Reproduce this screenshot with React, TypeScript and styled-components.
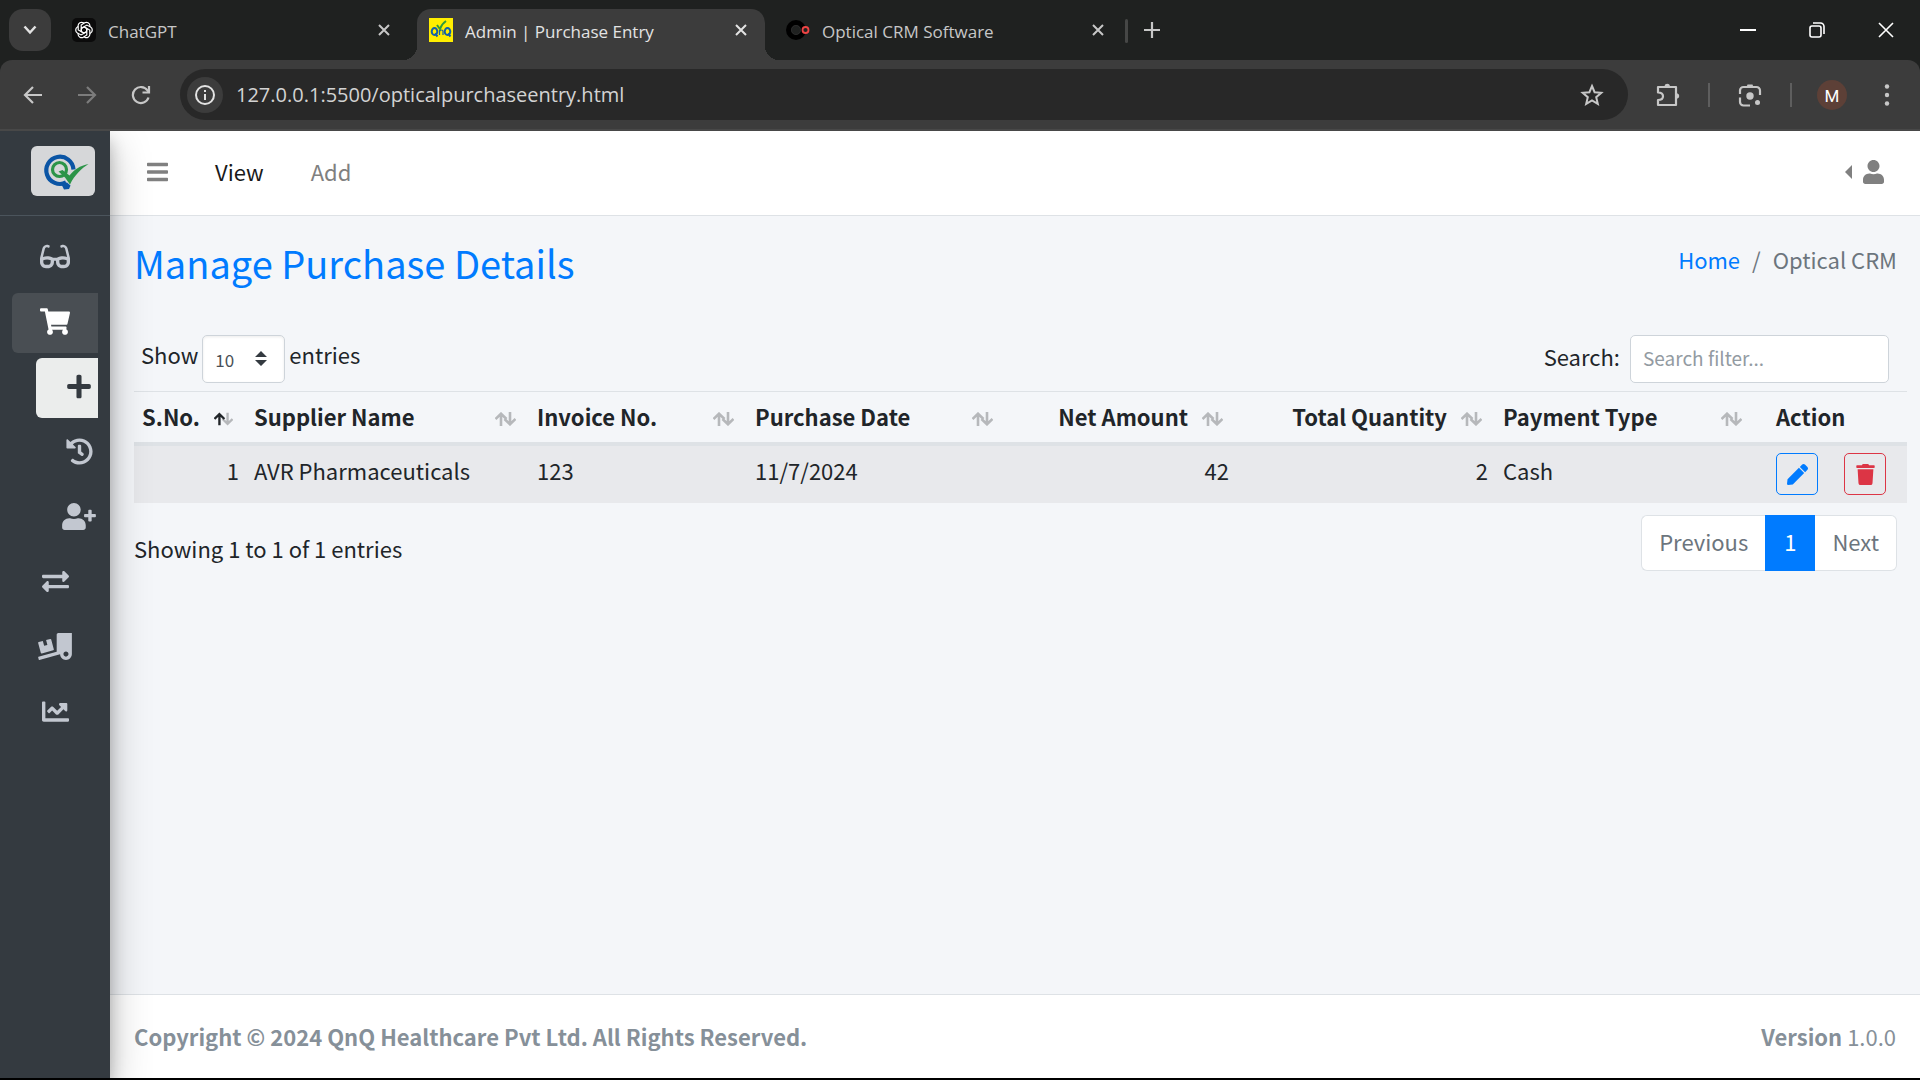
import React from 'react';
import styled, { createGlobalStyle, css } from 'styled-components';
import {
  FaBars,
  FaChartLine,
  FaExchangeAlt,
  FaGlasses,
  FaHistory,
  FaPen,
  FaPlus,
  FaShoppingCart,
  FaTrash,
  FaTruckLoading,
  FaUser,
  FaUserPlus,
} from 'react-icons/fa';

const GlobalStyle = createGlobalStyle`
  *, *::before, *::after { box-sizing: border-box; }
  body {
    margin: 0;
    background: #000;
    color: #212529;
    font-family: "Noto Sans CJK SC", "Noto Sans", sans-serif;
    font-size: 22px;
    line-height: 36px;
  }
  button, input, select { font: inherit; margin: 0; }
  a { text-decoration: none; }
`;

const Window = styled.div`
  display: flex;
  flex-direction: column;
  min-height: 100vh;
  padding-bottom: 2px;
`;

/* ---------- browser frame ---------- */

const chromeFont = css`
  font-family: "Open Sans", "Noto Sans", sans-serif;
`;

const TabStrip = styled.div`
  ${chromeFont}
  display: flex;
  height: 60px;
  padding-left: 9px;
  background: #1f2120;
  color: #c7c7c7;
  font-size: 17px;
  line-height: 24px;
`;

const IconButton = styled.button`
  display: flex;
  align-items: center;
  justify-content: center;
  flex: none;
  padding: 0;
  border: 0;
  background: none;
  color: inherit;
  svg { display: block; }
`;

const TabSearch = styled(IconButton)`
  width: 42px;
  height: 42px;
  margin: 9px 9px 0 0;
  border-radius: 14px;
  background: #3c3c3c;
  color: #e3e3e3;
`;

const Tab = styled.div<{ $active?: boolean }>`
  position: relative;
  display: flex;
  align-items: center;
  flex: 0 1 auto;
  width: ${(p) => (p.$active ? 348 : 357)}px;
  height: 51px;
  margin-top: 9px;
  padding: 0 18px 9px 12px;
  border-radius: 14px 14px 0 0;
  ${(p) =>
    p.$active &&
    css`
      background: #3c3c3c;
      color: #e3e3e3;
      &::before, &::after {
        content: "";
        position: absolute;
        bottom: 0;
        width: 14px;
        height: 14px;
      }
      &::before { left: -14px; background: radial-gradient(circle at 0 0, transparent 14px, #3c3c3c 14px); }
      &::after { right: -14px; background: radial-gradient(circle at 100% 0, transparent 14px, #3c3c3c 14px); }
    `}
  &:first-of-type { padding-right: 27px; }
  &:last-of-type { padding-left: 21px; }
`;

const Tabs = styled.div`
  display: flex;
  min-width: 0;
`;

const TabTitle = styled.span`
  flex: 1;
  margin-left: 12px;
  padding-top: 4px;
  white-space: nowrap;
`;

const TabDivider = styled.span`
  width: 3px;
  height: 24px;
  margin: 19px 14px 0 3px;
  border-radius: 2px;
  background: #464746;
`;

const NewTab = styled(IconButton)`
  width: 20px;
  height: 60px;
`;

const WindowButtons = styled.div`
  display: flex;
  margin-left: auto;
  color: #fff;
`;

const WindowButton = styled(IconButton)`
  width: 69px;
  height: 59px;
`;

const ToolbarWrap = styled.div`
  background: #1f2120;
`;

const Toolbar = styled.div`
  ${chromeFont}
  display: flex;
  align-items: center;
  height: 71px;
  padding: 0 19px 0 6px;
  background: #3c3c3c;
  border-bottom: 2px solid #484848;
  border-radius: 12px 12px 0 0;
  color: #c7c7c7;
`;

const NavButton = styled(IconButton)<{ $dim?: boolean }>`
  width: 54px;
  height: 51px;
  color: ${(p) => (p.$dim ? '#7c7c7c' : '#c7c7c7')};
`;

const AddressBar = styled.div`
  display: flex;
  align-items: center;
  flex: 1;
  height: 51px;
  margin-left: 12px;
  padding: 0 24px 0 7px;
  border-radius: 26px;
  background: #282828;
`;

const SiteInfo = styled(IconButton)`
  width: 36px;
  height: 36px;
  margin-right: 13px;
  border-radius: 50%;
  background: #3c3c3c;
  color: #e3e3e3;
`;

const Address = styled.input`
  flex: 1;
  min-width: 0;
  padding: 0;
  border: 0;
  outline: 0;
  background: none;
  color: #d3d3d3;
  font-size: 20px;
  line-height: 28px;
`;

const ToolbarDivider = styled.span`
  width: 2px;
  height: 24px;
  margin: 0 12px;
  background: #5e5e5e;
`;

const ToolButton = styled(IconButton)`
  width: 56px;
  height: 51px;
`;

const Extensions = styled(ToolButton)`
  margin-left: 12px;
`;

const Avatar = styled.button`
  width: 30px;
  height: 30px;
  margin: 0 26px 0 13px;
  padding: 0;
  border: 0;
  border-radius: 50%;
  background: #5d4037;
  color: #fff;
  font-family: Roboto, sans-serif;
  font-size: 17px;
  line-height: 32px;
`;

/* ---------- application ---------- */

const Page = styled.div`
  display: flex;
  flex: 1;
  background: #f4f6f9;
`;

const Sidebar = styled.aside`
  position: relative;
  z-index: 1;
  flex: none;
  width: 110px;
  background: #343a40;
  box-shadow: 0 14px 42px rgba(0, 0, 0, 0.25), 0 10px 15px rgba(0, 0, 0, 0.22);
  clip-path: inset(0 -60px 0 0);
`;

const Brand = styled.a`
  display: flex;
  height: 85px;
  padding: 15px 0 0 31px;
  border-bottom: 1px solid #4b545c;
`;

const BrandMark = styled.span`
  width: 64px;
  height: 50px;
  border-radius: 6px;
  background: #d6d7d9;
`;

const Menu = styled.nav`
  display: flex;
  flex-direction: column;
  gap: 5px;
  padding: 12px 12px 0;
`;

const MenuItem = styled.a<{ $tone?: 'active' | 'current'; $nested?: boolean; $iconWidth: number }>`
  display: flex;
  align-items: center;
  justify-content: center;
  height: 60px;
  padding-bottom: 4px;
  margin-left: ${(p) => (p.$nested ? 24 : 0)}px;
  padding-left: ${(p) => (p.$nested ? 24 : 0)}px;
  border-radius: 6px 0 0 6px;
  color: ${(p) => (p.$tone === 'active' ? '#fff' : p.$tone === 'current' ? '#343a40' : '#c2c7d0')};
  background: ${(p) => (p.$tone === 'active' ? '#494e53' : p.$tone === 'current' ? '#ebedec' : 'none')};
  svg {
    flex: none;
    width: ${(p) => p.$iconWidth}px;
    height: 27px;
  }
`;

const Main = styled.div`
  display: flex;
  flex: 1;
  flex-direction: column;
  min-width: 0;
`;

const Navbar = styled.header`
  display: flex;
  align-items: center;
  height: 85px;
  padding: 0 36px 3px 37px;
  border-bottom: 1px solid #dee2e6;
  background: #fff;
  color: #808080;
  svg { width: 21px; height: 24px; }
`;

const NavLink = styled.a<{ $active?: boolean }>`
  margin-left: 47px;
  padding-bottom: 2px;
  color: ${(p) => (p.$active ? '#191919' : '#808080')};
`;

const UserMenu = styled(IconButton)`
  gap: 11px;
  margin-left: auto;
`;

const Caret = styled.span`
  border: 7px solid transparent;
  border-right-color: currentColor;
  border-left: 0;
`;

const Content = styled.main`
  flex: 1;
  padding: 21px 13px 0 24px;
`;

const PageHead = styled.div`
  display: flex;
  justify-content: space-between;
  padding-right: 10px;
`;

const Title = styled.h1`
  margin: 0;
  color: #007bff;
  font-size: 38px;
  font-weight: 400;
  line-height: 51px;
`;

const Crumbs = styled.nav`
  display: flex;
  gap: 12px;
  padding-top: 4px;
  color: #6c757d;
  a { color: #007bff; }
`;

const TableTools = styled.div`
  display: flex;
  justify-content: space-between;
  padding: 47px 18px 8px 7px;
`;

const LengthLabel = styled.label`
  display: flex;
  gap: 4px;
  line-height: 39px;
`;

const controlBox = css`
  height: 48px;
  border: 1px solid #ced4da;
  border-radius: 5px;
  background: #fff;
  color: #495057;
`;

const SelectBox = styled.span`
  position: relative;
  display: flex;
  svg { position: absolute; right: 18px; top: 16px; pointer-events: none; }
`;

const LengthSelect = styled.select`
  ${controlBox}
  width: 83px;
  padding: 0 12px;
  appearance: none;
  box-shadow: inset 0 1px 3px rgba(0, 0, 0, 0.08);
  font-size: 17px;
`;

const SearchLabel = styled.label`
  display: flex;
  gap: 10px;
  line-height: 43px;
`;

const SearchInput = styled.input`
  ${controlBox}
  width: 259px;
  padding: 0 12px 3px;
  font-size: 19px;
  &::placeholder { color: #939ba2; opacity: 1; }
`;

const Table = styled.table`
  width: 100%;
  table-layout: fixed;
  border-collapse: separate;
  border-spacing: 0;
`;

const HeadCell = styled.th<{ $end?: boolean }>`
  height: 55px;
  padding: 0 13px 0 8px;
  border-top: 1px solid #dee2e6;
  border-bottom: 4px solid #dee2e6;
  font-weight: 700;
  line-height: 36px;
  text-align: left;
  white-space: nowrap;
  &:last-child { padding-left: 21px; }
  > span {
    display: flex;
    align-items: center;
    justify-content: ${(p) => (p.$end ? 'flex-end' : 'space-between')};
    gap: 14px;
    padding-bottom: 3px;
  }
  svg { margin-top: 6px; }
`;

const Cell = styled.td<{ $end?: boolean }>`
  height: 57px;
  padding: 6px 7px 12px 8px;
  background: #e8e9ec;
  text-align: ${(p) => (p.$end ? 'right' : 'left')};
  vertical-align: top;
  &:last-child { padding: 7px 21px 8px; }
`;

const Actions = styled.div`
  display: flex;
  gap: 26px;
`;

const ActionButton = styled(IconButton)<{ $color: string }>`
  width: 42px;
  height: 42px;
  border: 1px solid ${(p) => p.$color};
  border-radius: 5px;
  color: ${(p) => p.$color};
`;

const TableFoot = styled.div`
  display: flex;
  justify-content: space-between;
  padding: 12px 10px 0 0;
`;

const Info = styled.div`
  padding-top: 15px;
`;

const Pager = styled.div`
  display: flex;
  height: 56px;
`;

const PageButton = styled.button<{ $active?: boolean }>`
  padding: 0 ${(p) => (p.$active ? 18 : 17)}px 4px;
  border: 1px solid ${(p) => (p.$active ? '#007bff' : '#dee2e6')};
  background: ${(p) => (p.$active ? '#007bff' : '#fff')};
  color: ${(p) => (p.$active ? '#fff' : '#6c757d')};
  &:first-child { border-right: 0; border-radius: 6px 0 0 6px; }
  &:last-child { border-left: 0; border-radius: 0 6px 6px 0; }
`;

const Footer = styled.footer`
  display: flex;
  justify-content: space-between;
  padding: 24px;
  border-top: 1px solid #dee2e6;
  background: #fff;
  color: #869099;
  line-height: 35px;
`;

/* ---------- drawings ---------- */

const CloseIcon = () => (
  <svg width="12" height="12" viewBox="0 0 12 12" stroke="currentColor" strokeWidth="2">
    <path d="M1 1l10 10M11 1L1 11" />
  </svg>
);

const ChatIcon = () => (
  <svg width="24" height="24" viewBox="0 0 24 24" fill="none" stroke="#fff" strokeWidth="1.2">
    <rect width="24" height="24" rx="5" fill="#0b0b0b" stroke="none" />
    {[0, 60, 120, 180, 240, 300].map((a) => (
      <path key={a} transform={`rotate(${a} 12 12)`} d="M9.2 13.6V7l3.5-2.2a3.5 3.5 0 0 1 5.2 3v1M9.2 10.5L12 9" />
    ))}
  </svg>
);

const QnqIcon = () => (
  <svg width="24" height="24" viewBox="0 0 24 24" fill="none">
    <rect width="24" height="24" fill="#ffee00" />
    <ellipse cx="5.5" cy="13.5" rx="2.8" ry="3.5" stroke="#1560a8" strokeWidth="2" />
    <ellipse cx="18.5" cy="13.5" rx="2.8" ry="3.5" stroke="#1560a8" strokeWidth="2" />
    <path d="M6 15.5l2.500 3M19 15.5l2.500 3" stroke="#1560a8" strokeWidth="2" />
    <path d="M10.5 17v-5M10.5 13.5c1-2 3.5-2 3.5 0V17" stroke="#1560a8" strokeWidth="1.2" />
    <path d="M8 7l3 4c1-3 3-6 6-8" stroke="#2f9a3c" strokeWidth="2" />
  </svg>
);

const OpticalIcon = () => (
  <svg width="24" height="24" viewBox="0 0 24 24" fill="none">
    <circle cx="10" cy="12" r="7.5" stroke="#000" strokeWidth="5" />
    <circle cx="10" cy="12" r="4.5" stroke="#2b2b2b" />
    <circle cx="19.5" cy="12" r="3" fill="#1f2120" stroke="#ef4444" strokeWidth="1.8" />
  </svg>
);

const ArrowIcon = ({ flip }: { flip?: boolean }) => (
  <svg width="20" height="20" viewBox="0 0 20 20" fill="none" stroke="currentColor" strokeWidth="2.2">
    <path d={flip ? 'M1 10h17M10 2l8 8-8 8' : 'M19 10H2M10 2l-8 8 8 8'} />
  </svg>
);

const ReloadIcon = () => (
  <svg width="20" height="20" viewBox="0 0 20 20" fill="none" stroke="currentColor" strokeWidth="2.2">
    <path d="M17.5 12.5A8 8 0 1 1 16.5 5.5L18 7" />
    <path d="M18 1v6.5h-6.5" />
  </svg>
);

const LogoDrawing = () => (
  <svg width="64" height="50" viewBox="0 0 64 50" fill="none">
    <path d="M35 36.5A13.6 13.6 0 1 1 42.5 23.5" stroke="#0b55a5" strokeWidth="4.2" />
    <path d="M30 37.5l6-1 3.5 3-1.5 3.5-5 .5z" fill="#0b55a5" />
    <circle cx="28.5" cy="23.5" r="7" stroke="#2c9448" strokeWidth="3.2" />
    <path d="M27.5 25.5l4-1.5 7 5.5C43 24 49 19.5 57.5 18 51 22 43.5 29 39 38.5l-5-7z" fill="#2c9448" />
  </svg>
);

const SortIcon = ({ sorted }: { sorted?: boolean }) => (
  <svg width="21" height="14" viewBox="0 0 21 14" fill="none" strokeWidth="2.6">
    <path d="M15 0v12M9.5 7l5.5 5.300 5.500-5.300" stroke="#b6b8bb" />
    <path d="M6 14V2M.5 7L6 1.700 11.500 7" stroke={sorted ? '#212529' : '#b6b8bb'} />
  </svg>
);

const menu: {
  label: string;
  icon: React.ReactNode;
  iconWidth: number;
  tone?: 'active' | 'current';
  nested?: boolean;
}[] = [
  { label: 'Optical', icon: <FaGlasses />, iconWidth: 30 },
  { label: 'Purchase', icon: <FaShoppingCart />, iconWidth: 30, tone: 'active' },
  { label: 'New purchase', icon: <FaPlus />, iconWidth: 24, tone: 'current', nested: true },
  { label: 'Purchase history', icon: <FaHistory />, iconWidth: 27, nested: true },
  { label: 'Add supplier', icon: <FaUserPlus />, iconWidth: 34, nested: true },
  { label: 'Exchange', icon: <FaExchangeAlt />, iconWidth: 27 },
  { label: 'Delivery', icon: <FaTruckLoading />, iconWidth: 34 },
  { label: 'Reports', icon: <FaChartLine />, iconWidth: 27 },
];

const columns: { title: string; width: number; end?: boolean; sorted?: boolean; plain?: boolean }[] = [
  { title: 'S.No.', width: 112, sorted: true },
  { title: 'Supplier Name', width: 283 },
  { title: 'Invoice No.', width: 218 },
  { title: 'Purchase Date', width: 259 },
  { title: 'Net Amount', width: 230, end: true },
  { title: 'Total Quantity', width: 259, end: true },
  { title: 'Payment Type', width: 260 },
  { title: 'Action', width: 152, plain: true },
];

export default function App() {
  return (
    <Window>
      <GlobalStyle />
      <TabStrip>
        <TabSearch aria-label="Search tabs">
          <svg width="14" height="10" viewBox="0 0 14 10" fill="none" stroke="currentColor" strokeWidth="2.5">
            <path d="M1.5 1.5L7 7.5l5.5-6" />
          </svg>
        </TabSearch>
        <Tabs>
          <Tab>
            <ChatIcon />
            <TabTitle>ChatGPT</TabTitle>
            <IconButton aria-label="Close ChatGPT"><CloseIcon /></IconButton>
          </Tab>
          <Tab $active>
            <QnqIcon />
            <TabTitle>Admin | Purchase Entry</TabTitle>
            <IconButton aria-label="Close Admin"><CloseIcon /></IconButton>
          </Tab>
          <Tab>
            <OpticalIcon />
            <TabTitle>Optical CRM Software</TabTitle>
            <IconButton aria-label="Close Optical CRM Software"><CloseIcon /></IconButton>
          </Tab>
        </Tabs>
        <TabDivider />
        <NewTab aria-label="New tab">
          <svg width="16" height="16" viewBox="0 0 16 16" stroke="currentColor" strokeWidth="2.2">
            <path d="M8 0v16M0 8h16" />
          </svg>
        </NewTab>
        <WindowButtons>
          <WindowButton aria-label="Minimize">
            <svg width="16" height="2" viewBox="0 0 16 2" fill="currentColor">
              <path d="M0 0h16v2H0z" />
            </svg>
          </WindowButton>
          <WindowButton aria-label="Restore">
            <svg width="16" height="16" viewBox="0 0 16 16" fill="none" stroke="currentColor" strokeWidth="1.6">
              <rect x="1" y="4" width="11" height="11" rx="2" />
              <path d="M4 1h7.5A3.5 3.5 0 0 1 15 4.5V12" />
            </svg>
          </WindowButton>
          <WindowButton aria-label="Close window">
            <svg width="16" height="16" viewBox="0 0 16 16" stroke="currentColor" strokeWidth="1.6">
              <path d="M1 1l14 14M15 1L1 15" />
            </svg>
          </WindowButton>
        </WindowButtons>
      </TabStrip>

      <ToolbarWrap>
        <Toolbar>
          <NavButton aria-label="Back"><ArrowIcon /></NavButton>
          <NavButton aria-label="Forward" $dim><ArrowIcon flip /></NavButton>
          <NavButton aria-label="Reload"><ReloadIcon /></NavButton>
          <AddressBar>
            <SiteInfo aria-label="Site information">
              <svg width="20" height="20" viewBox="0 0 20 20" fill="none" stroke="currentColor" strokeWidth="2">
                <circle cx="10" cy="10" r="9" />
                <path d="M10 9v6M10 5v2" />
              </svg>
            </SiteInfo>
            <Address aria-label="Address" defaultValue="127.0.0.1:5500/opticalpurchaseentry.html" />
            <IconButton aria-label="Bookmark">
              <svg width="24" height="24" viewBox="0 0 24 24" fill="none" stroke="currentColor" strokeWidth="2">
                <path d="M12 3l2.600 6.200 6.700.6-5.100 4.400 1.600 6.600L12 17.300l-5.800 3.500 1.600-6.600-5.100-4.400 6.700-.6z" />
              </svg>
            </IconButton>
          </AddressBar>
          <Extensions aria-label="Extensions">
            <svg width="26" height="26" viewBox="0 0 26 26" fill="none" stroke="currentColor" strokeWidth="2.2" strokeLinejoin="round">
              <path d="M3 5h18v18H3v-5c3.500 0 5-1.500 5-3.800S6.500 10.500 3 10.500z" />
              <path d="M9.500 4a2.800 2.800 0 0 1 5.500 0zM22 11.200a2.800 2.800 0 0 1 0 5.500z" fill="currentColor" stroke="none" />
            </svg>
          </Extensions>
          <ToolbarDivider />
          <ToolButton aria-label="Search with Lens">
            <svg width="24" height="24" viewBox="0 0 24 24" fill="none" stroke="currentColor" strokeWidth="2.2">
              <path d="M2 11V7.500A3.500 3.500 0 0 1 5.500 4h13A3.500 3.500 0 0 1 22 7.500V12M2 14.500V19a3.500 3.500 0 0 0 3.500 3.500H12" />
              <path d="M8.500 4l1-2.500h5l1 2.500z" fill="currentColor" stroke="none" />
              <circle cx="12" cy="13" r="3.7" fill="currentColor" stroke="none" />
              <circle cx="19.5" cy="19.5" r="2.5" fill="currentColor" stroke="none" />
            </svg>
          </ToolButton>
          <ToolbarDivider />
          <Avatar>M</Avatar>
          <IconButton aria-label="Menu">
            <svg width="28" height="24" viewBox="0 0 28 24" fill="currentColor">
              <circle cx="14" cy="3.5" r="2.2" />
              <circle cx="14" cy="12" r="2.2" />
              <circle cx="14" cy="20.5" r="2.2" />
            </svg>
          </IconButton>
        </Toolbar>
      </ToolbarWrap>

      <Page>
        <Sidebar>
          <Brand href="#" aria-label="QnQ Healthcare">
            <BrandMark><LogoDrawing /></BrandMark>
          </Brand>
          <Menu>
            {menu.map((m) => (
              <MenuItem
                key={m.label}
                href="#"
                aria-label={m.label}
                $tone={m.tone}
                $nested={m.nested}
                $iconWidth={m.iconWidth}
              >
                {m.icon}
              </MenuItem>
            ))}
          </Menu>
        </Sidebar>

        <Main>
          <Navbar>
            <IconButton aria-label="Toggle sidebar"><FaBars /></IconButton>
            <NavLink href="#" $active>View</NavLink>
            <NavLink href="#">Add</NavLink>
            <UserMenu aria-label="Account">
              <Caret />
              <FaUser />
            </UserMenu>
          </Navbar>

          <Content>
            <PageHead>
              <Title>Manage Purchase Details</Title>
              <Crumbs>
                <a href="#">Home</a>
                <span>/</span>
                <span>Optical CRM</span>
              </Crumbs>
            </PageHead>

            <TableTools>
              <LengthLabel>
                Show
                <SelectBox>
                  <LengthSelect defaultValue="10">
                    <option>10</option>
                    <option>25</option>
                    <option>50</option>
                  </LengthSelect>
                  <svg width="12" height="15" viewBox="0 0 12 15" fill="#343a40">
                    <path d="M0 6l6-6 6 6zM0 9l6 6 6-6z" />
                  </svg>
                </SelectBox>
                entries
              </LengthLabel>
              <SearchLabel>
                Search:
                <SearchInput type="search" placeholder="Search filter..." />
              </SearchLabel>
            </TableTools>

            <Table>
              <colgroup>
                {columns.map((c) => (
                  <col key={c.title} width={c.width} />
                ))}
              </colgroup>
              <thead>
                <tr>
                  {columns.map((c) => (
                    <HeadCell key={c.title} $end={c.end}>
                      <span>
                        {c.title}
                        {!c.plain && <SortIcon sorted={c.sorted} />}
                      </span>
                    </HeadCell>
                  ))}
                </tr>
              </thead>
              <tbody>
                <tr>
                  <Cell $end>1</Cell>
                  <Cell>AVR Pharmaceuticals</Cell>
                  <Cell>123</Cell>
                  <Cell>11/7/2024</Cell>
                  <Cell $end>42</Cell>
                  <Cell $end>2</Cell>
                  <Cell>Cash</Cell>
                  <Cell>
                    <Actions>
                      <ActionButton $color="#007bff" aria-label="Edit"><FaPen size={21} /></ActionButton>
                      <ActionButton $color="#dc3545" aria-label="Delete"><FaTrash size={21} /></ActionButton>
                    </Actions>
                  </Cell>
                </tr>
              </tbody>
            </Table>

            <TableFoot>
              <Info>Showing 1 to 1 of 1 entries</Info>
              <Pager>
                <PageButton>Previous</PageButton>
                <PageButton $active>1</PageButton>
                <PageButton>Next</PageButton>
              </Pager>
            </TableFoot>
          </Content>

          <Footer>
            <strong>Copyright © 2024 QnQ Healthcare Pvt Ltd. All Rights Reserved.</strong>
            <span><b>Version</b> 1.0.0</span>
          </Footer>
        </Main>
      </Page>
    </Window>
  );
}
